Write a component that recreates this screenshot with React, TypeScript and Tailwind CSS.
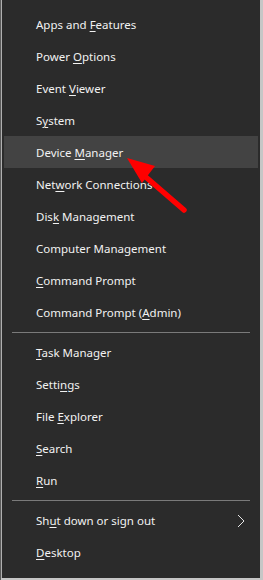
import React from 'react';

// Una entrada del menú: texto con la letra de acceso subrayada
interface Entrada {
  antes: string;
  tecla: string;
  despues: string;
  activa?: boolean;
  submenu?: boolean;
}

const grupos: Entrada[][] = [
  [
    { antes: 'Apps and ', tecla: 'F', despues: 'eatures' },
    { antes: 'Power ', tecla: 'O', despues: 'ptions' },
    { antes: 'Event ', tecla: 'V', despues: 'iewer' },
    { antes: 'S', tecla: 'y', despues: 'stem' },
    { antes: 'Device ', tecla: 'M', despues: 'anager', activa: true },
    { antes: 'Net', tecla: 'w', despues: 'ork Connections' },
    { antes: 'Dis', tecla: 'k', despues: ' Management' },
    { antes: 'Computer Management', tecla: '', despues: '' },
    { antes: '', tecla: 'C', despues: 'ommand Prompt' },
    { antes: 'Command Prompt (', tecla: 'A', despues: 'dmin)' },
  ],
  [
    { antes: '', tecla: 'T', despues: 'ask Manager' },
    { antes: 'Setti', tecla: 'n', despues: 'gs' },
    { antes: 'File ', tecla: 'E', despues: 'xplorer' },
    { antes: '', tecla: 'S', despues: 'earch' },
    { antes: '', tecla: 'R', despues: 'un' },
  ],
  [
    { antes: 'Sh', tecla: 'u', despues: 't down or sign out', submenu: true },
    { antes: '', tecla: 'D', despues: 'esktop' },
  ],
];

const Fila = ({ entrada }: { entrada: Entrada }) => (
  <div
    className={`h-[32px] mx-[2px] pl-[32px] pr-[13px] pt-[2px] flex items-center justify-between ${
      entrada.activa ? 'bg-[#434343]' : ''
    }`}
  >
    <span className="text-[11.5px] text-[#f2f2f2] leading-none">
      {entrada.antes}
      {entrada.tecla && <span className="underline underline-offset-[2px]">{entrada.tecla}</span>}
      {entrada.despues}
    </span>
    {entrada.submenu && (
      <svg width="8" height="14" viewBox="0 0 8 14">
        <path d="M1 1 L7 7 L1 13" fill="none" stroke="#e6e6e6" strokeWidth="1" />
      </svg>
    )}
  </div>
);

export default function App() {
  return (
    <div
      className="w-[263px] h-[580px] bg-[#c6c6c6] flex relative overflow-hidden"
      style={{ fontFamily: '"Noto Sans", "Open Sans", sans-serif' }}
    >
      <div className="w-[1px] h-full bg-[#5a5a5a]" />
      <div className="w-[259px] h-[578px] bg-[#2b2b2b] border-l border-[#b0b0b0] pt-[8px]">
        {grupos.map((grupo, i) => (
          <div key={i}>
            {i > 0 && (
              <div className="h-[8px] flex items-center px-[10px]">
                <div className="w-[238px] h-[1px] bg-[#7a7a7a]" />
              </div>
            )}
            {grupo.map((e) => (
              <Fila key={e.antes + e.tecla + e.despues} entrada={e} />
            ))}
          </div>
        ))}
      </div>

      {/* Flecha roja encima del menú */}
      <svg className="absolute left-0 top-0 pointer-events-none" width="263" height="580">
        <line x1="184" y1="210" x2="140" y2="172" stroke="#ff0000" strokeWidth="5.5" strokeLinecap="round" />
        <polygon points="127,158 155,166 142,183" fill="#ff0000" />
      </svg>
    </div>
  );
}
